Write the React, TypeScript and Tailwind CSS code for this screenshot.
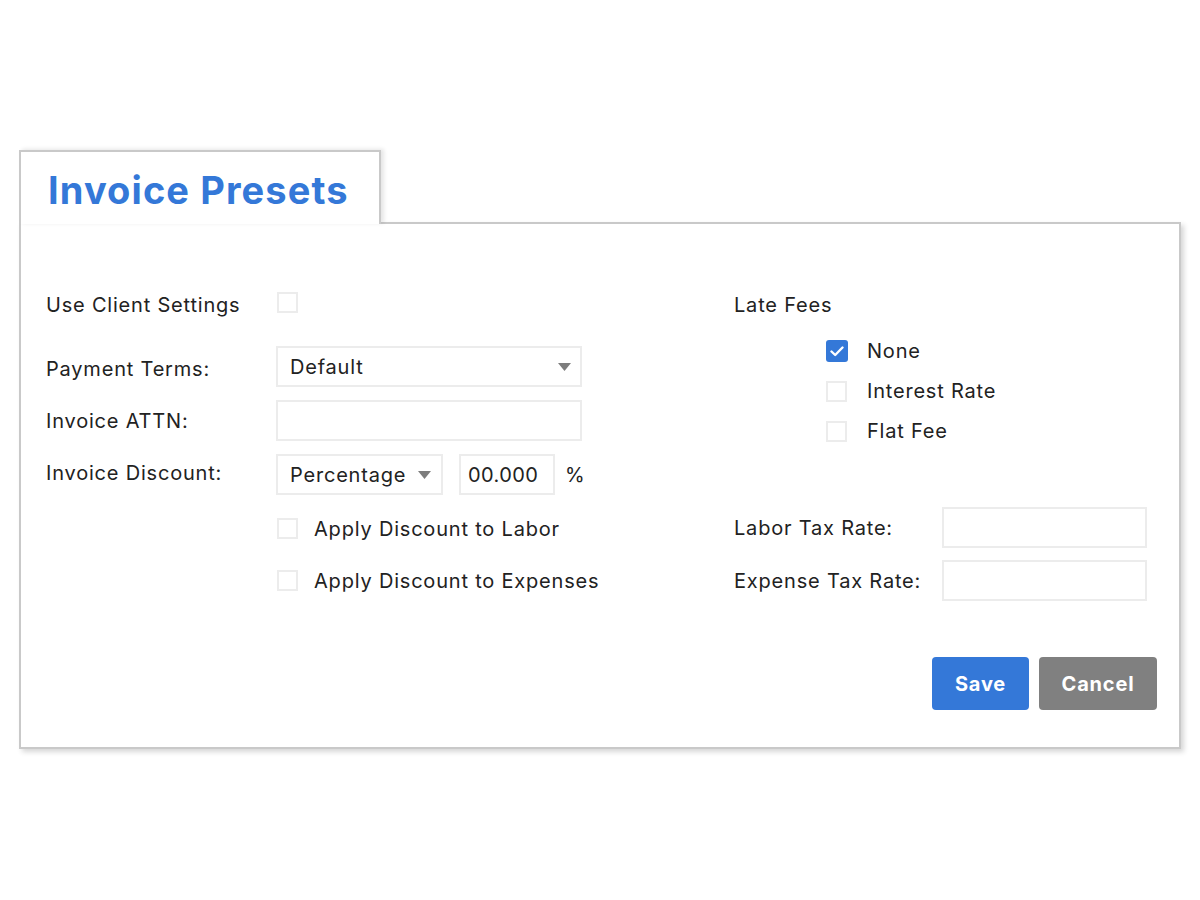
import type React from "react";

const font = { fontFamily: "Inter, 'Noto Sans', sans-serif" };

const Caret: React.FC = () => (
	<svg width="13" height="8" viewBox="0 0 13 8" className="shrink-0">
		<path d="M0 0 L13 0 L6.5 8 Z" fill="#7d7d7d" />
	</svg>
);

const Box: React.FC<{ checked?: boolean }> = ({ checked }) =>
	checked ? (
		<span className="flex h-[22px] w-[22px] shrink-0 items-center justify-center rounded-[3px] bg-[#3478d8]">
			<svg width="14" height="11" viewBox="0 0 14 11">
				<path
					d="M1.5 5.5 L5.2 9 L12.5 1.5"
					fill="none"
					stroke="#fff"
					strokeWidth="2.4"
					strokeLinecap="round"
					strokeLinejoin="round"
				/>
			</svg>
		</span>
	) : (
		<span className="block h-[21px] w-[21px] shrink-0 border-2 border-[#ececec] bg-white" />
	);

const Field: React.FC<{ className?: string; children?: React.ReactNode }> = ({
	className = "",
	children,
}) => (
	<div
		className={`flex h-[41px] items-center border-2 border-[#ececec] bg-white text-[20px] text-[#222] ${className}`}
	>
		{children}
	</div>
);

export default function App() {
	return (
		<div className="min-h-[900px] bg-white pt-[150px]" style={font}>
			<div className="ml-[19px] w-[1162px]">
				<div className="relative z-10 -mb-[2px] h-[74px] w-[362px] border-x-2 border-t-2 border-[#c9c9c9] bg-white pl-[27px] pt-[15px] shadow-[3px_-1px_4px_rgba(0,0,0,0.10)]">
					<h1 className="text-[38px] font-bold leading-[46px] tracking-[1.1px] text-[#3478d8]">
						Invoice Presets
					</h1>
				</div>

				<div className="border-2 border-[#c9c9c9] bg-white pb-[37px] pl-[25px] pr-[22px] pt-[68px] text-[20px] leading-[24px] tracking-[0.8px] text-[#222] shadow-[3px_3px_5px_rgba(0,0,0,0.16)]">
					<div className="flex">
						{/* left column */}
						<div className="flex w-[688px] flex-col">
							<div className="flex h-[26px] items-start">
								<span className="w-[230px] leading-[26px]">Use Client Settings</span>
								<span className="ml-[1px]">
									<Box />
								</span>
							</div>

							<div className="mt-[28px] flex items-center">
								<span className="mt-[4px] w-[230px]">Payment Terms:</span>
								<Field className="w-[306px] justify-between pl-[12px] pr-[9px]">
									<span>Default</span>
									<Caret />
								</Field>
							</div>

							<div className="mt-[13px] flex items-center">
								<span className="w-[230px]">Invoice ATTN:</span>
								<Field className="w-[306px]" />
							</div>

							<div className="mt-[13px] flex items-center">
								<span className="-mt-[4px] w-[230px]">Invoice Discount:</span>
								<Field className="w-[167px] justify-between pl-[12px] pr-[10px]">
									<span>Percentage</span>
									<Caret />
								</Field>
								<Field className="ml-[16px] w-[96px] pl-[7px] tracking-[0.4px]">
									<span>00.000</span>
								</Field>
								<span className="ml-[10px]">%</span>
							</div>

							<div className="mt-[23px] flex h-[21px] items-center pl-[231px]">
								<Box />
								<span className="ml-[16px]">Apply Discount to Labor</span>
							</div>

							<div className="mt-[31px] flex h-[21px] items-center pl-[231px]">
								<Box />
								<span className="ml-[16px]">Apply Discount to Expenses</span>
							</div>
						</div>

						{/* right column */}
						<div className="flex flex-1 flex-col">
							<span className="leading-[26px]">Late Fees</span>
							<div className="ml-[92px] mt-[22px] flex flex-col gap-[18px]">
								<div className="flex h-[22px] items-center">
									<Box checked />
									<span className="ml-[19px]">None</span>
								</div>
								<div className="flex h-[22px] items-center">
									<Box />
									<span className="ml-[20px]">Interest Rate</span>
								</div>
								<div className="flex h-[22px] items-center">
									<Box />
									<span className="ml-[20px]">Flat Fee</span>
								</div>
							</div>

							<div className="mt-[65px] flex items-center">
								<span className="w-[208px]">Labor Tax Rate:</span>
								<Field className="w-[205px]" />
							</div>
							<div className="mt-[12px] flex items-center">
								<span className="w-[208px]">Expense Tax Rate:</span>
								<Field className="w-[205px]" />
							</div>
						</div>
					</div>

					<div className="mt-[56px] flex justify-end gap-[10px]">
						<button
							type="button"
							className="h-[53px] w-[97px] rounded-[4px] bg-[#3478d8] text-[20px] font-bold tracking-[0.8px] text-white"
						>
							Save
						</button>
						<button
							type="button"
							className="h-[53px] w-[118px] rounded-[4px] bg-[#808080] text-[20px] font-bold tracking-[0.8px] text-white"
						>
							Cancel
						</button>
					</div>
				</div>
			</div>
		</div>
	);
}
